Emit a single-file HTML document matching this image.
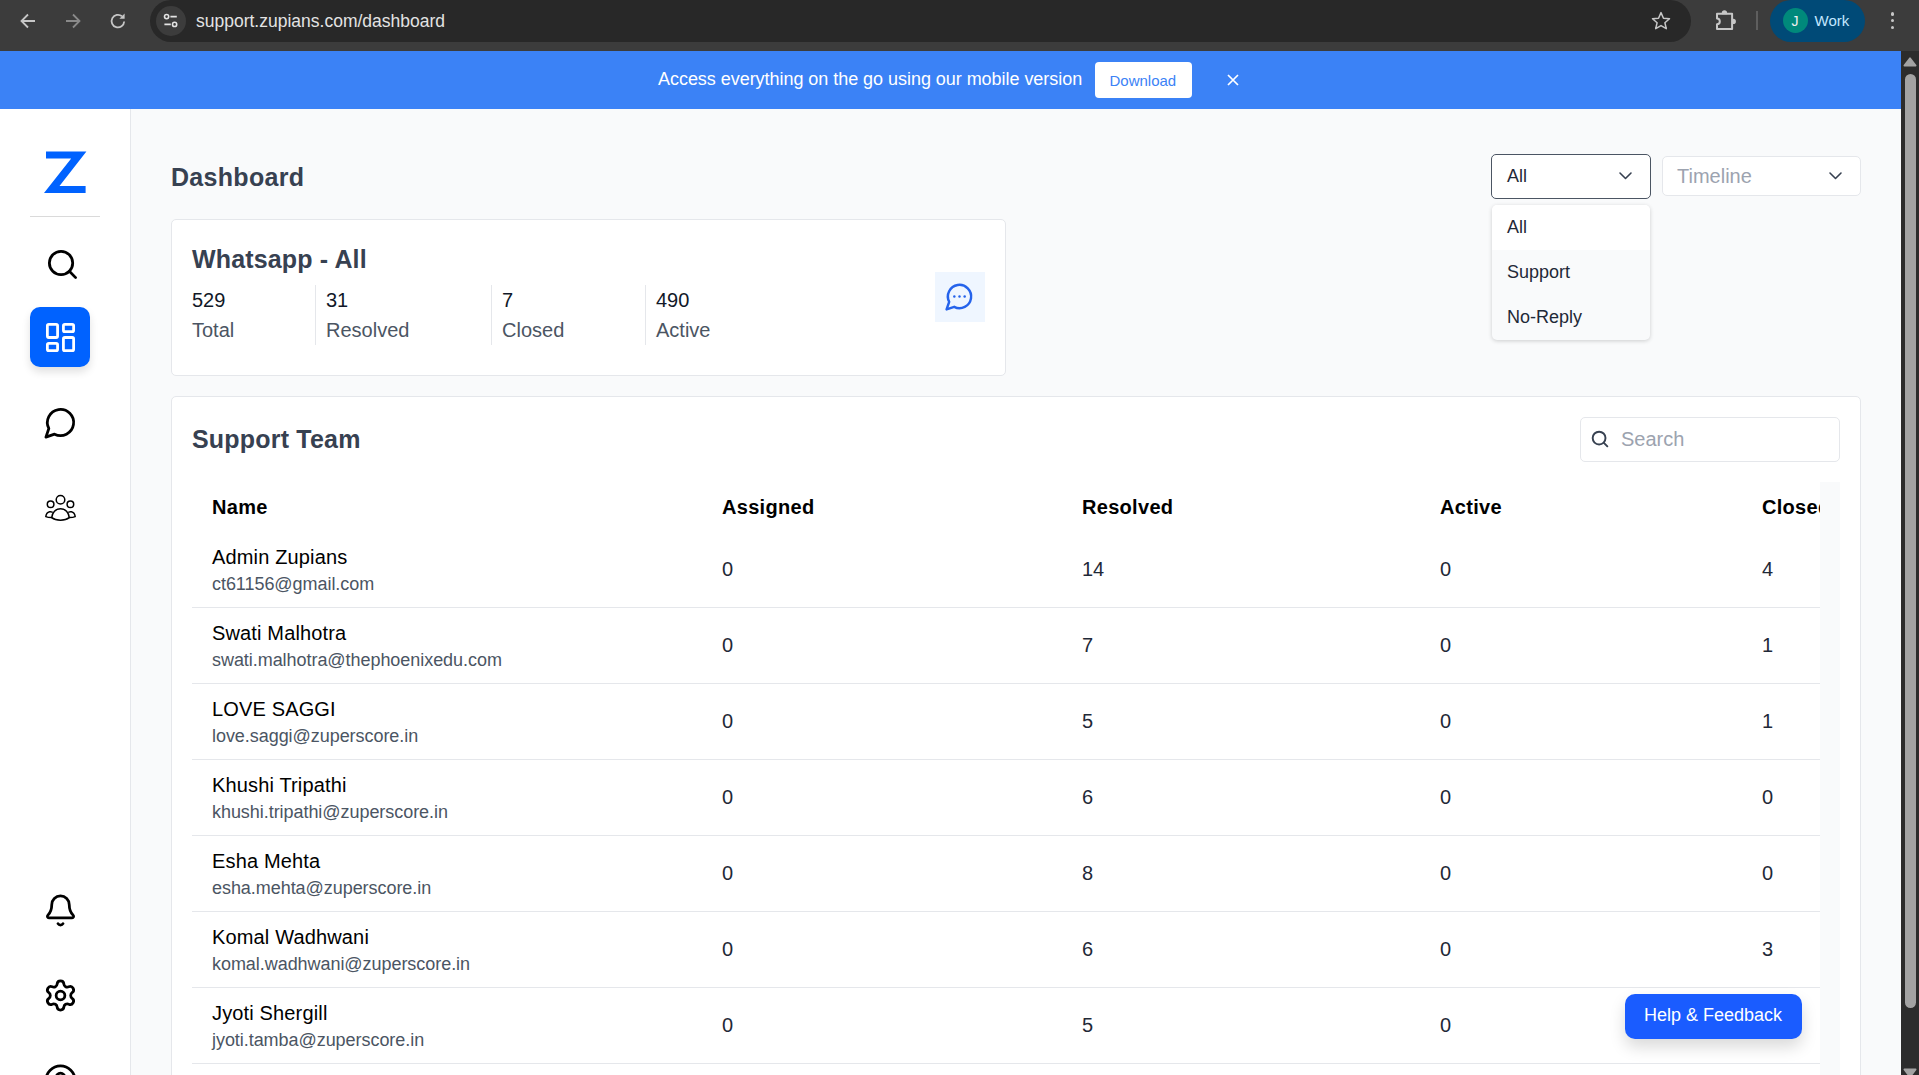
<!DOCTYPE html>
<html><head><meta charset="utf-8">
<style>
*{box-sizing:border-box;margin:0;padding:0}
html,body{width:1919px;height:1075px;overflow:hidden;background:#f9fafb;font-family:"Liberation Sans",sans-serif;position:relative}
.a{position:absolute}
.t{position:absolute;white-space:nowrap;line-height:1}
svg{position:absolute;overflow:visible}
#chrome{left:0;top:0;width:1919px;height:51px;background:#3c3c3c}
#omni{left:150px;top:0px;width:1541px;height:42px;border-radius:21px;background:#282828}
#banner{left:0;top:51px;width:1901px;height:58px;background:#3b82f6}
#vscroll{left:1901px;top:51px;width:18px;height:1024px;background:#2c2c2c}
#side{left:0;top:109px;width:131px;height:966px;background:#fff;border-right:1px solid #e5e7eb}
.stn{font-size:20px;color:#111827}.stl{font-size:20px;color:#4b5563}.vd{top:285px;width:1px;height:60px;background:#e5e7eb}.th{font-size:20px;font-weight:bold;color:#000;letter-spacing:0.3px}.nm{font-size:20px;color:#000;letter-spacing:0.15px}.em{font-size:18px;color:#4b5563;letter-spacing:-0.05px}.num{font-size:20px;color:#1f2937}
.card{position:absolute;background:#fff;border:1px solid #e5e7eb;border-radius:5px}
</style></head><body>
<!-- browser chrome -->
<div id="chrome" class="a"></div>
<svg style="left:19px;top:12px" width="18" height="18" viewBox="0 0 18 18"><path d="M16 9H3M9 2.5L2.5 9L9 15.5" fill="none" stroke="#c7c7c7" stroke-width="1.8"/></svg>
<svg style="left:64px;top:12px" width="18" height="18" viewBox="0 0 18 18"><path d="M2 9h13M9 2.5L15.5 9L9 15.5" fill="none" stroke="#8a8a8a" stroke-width="1.8"/></svg>
<svg style="left:109px;top:12px" width="18" height="18" viewBox="0 0 18 18"><path d="M15.2 9.5A6.3 6.3 0 1 1 13 4.3" fill="none" stroke="#c7c7c7" stroke-width="1.8"/><path d="M15.6 1.6v5.2h-5.2z" fill="#c7c7c7"/></svg>
<div id="omni" class="a"></div>
<div class="a" style="left:156px;top:6px;width:30px;height:30px;border-radius:15px;background:#3c3c3c"></div>
<svg style="left:162px;top:12px" width="18" height="18" viewBox="0 0 18 18"><circle cx="4.6" cy="4.6" r="2.1" fill="none" stroke="#e3e3e3" stroke-width="1.6"/><path d="M8.4 4.6h6.4M2.4 12.4h6.4" stroke="#e3e3e3" stroke-width="1.6"/><circle cx="12.6" cy="12.4" r="2.1" fill="none" stroke="#e3e3e3" stroke-width="1.6"/></svg>
<div class="t" style="left:196px;top:13px;font-size:17.5px;color:#e3e3e3">support.zupians.com/dashboard</div>
<svg style="left:1651px;top:11px" width="20" height="20" viewBox="0 0 20 20"><path d="M10 1.6l2.45 5.6 6.05.55-4.6 4 1.4 5.95L10 14.55 4.7 17.7l1.4-5.95-4.6-4 6.05-.55z" fill="none" stroke="#c7c7c7" stroke-width="1.5" stroke-linejoin="round"/></svg>
<svg style="left:1710px;top:6px" width="30" height="30" viewBox="0 0 30 30"><path d="M7 7.8H22.1V22.9H7V18.2A2.8 2.8 0 0 0 7 12.6Z" fill="none" stroke="#c7c7c7" stroke-width="2" stroke-linejoin="round"/><path d="M11.8 6.8A2.65 2.65 0 0 1 17.1 6.8V8.2H11.8Z" fill="#c7c7c7"/><path d="M23.2 12.7A2.7 2.7 0 0 1 23.2 18.1H22.1V12.7Z" fill="#c7c7c7"/></svg>
<div class="a" style="left:1756px;top:11px;width:2px;height:19px;background:#5e5e5e"></div>
<div class="a" style="left:1770px;top:0px;width:95px;height:42px;border-radius:21px;background:#004a77"></div>
<div class="a" style="left:1783px;top:8px;width:25px;height:25px;border-radius:13px;background:#00897b"></div>
<div class="t" style="left:1791.5px;top:14px;font-size:14px;color:#f0f0f0">J</div>
<div class="t" style="left:1814.5px;top:13.4px;font-size:15px;color:#c2e7ff">Work</div>
<div class="a" style="left:1890.8px;top:12px;width:3.6px;height:3.6px;border-radius:1.8px;background:#c7c7c7"></div>
<div class="a" style="left:1890.8px;top:18.8px;width:3.6px;height:3.6px;border-radius:1.8px;background:#c7c7c7"></div>
<div class="a" style="left:1890.8px;top:25.6px;width:3.6px;height:3.6px;border-radius:1.8px;background:#c7c7c7"></div>

<!-- banner -->
<div id="banner" class="a"></div>
<div class="t" style="left:658px;top:69.5px;font-size:18px;color:#fff;letter-spacing:-0.04px">Access everything on the go using our mobile version</div>
<div class="a" style="left:1095px;top:62px;width:97px;height:36px;border-radius:4px;background:#fff"></div>
<div class="t" style="left:1109.5px;top:73px;font-size:15px;color:#3b82f6">Download</div>
<svg style="left:1227px;top:74px" width="12" height="12" viewBox="0 0 12 12"><path d="M1 1l10 10M11 1L1 11" stroke="#fff" stroke-width="1.7"/></svg>

<!-- page scrollbar -->
<div id="vscroll" class="a"></div>
<svg style="left:1901px;top:51px" width="18" height="20" viewBox="0 0 18 20"><path d="M9 7.2L14.6 14.6H3.4z" fill="#a3a3a3" stroke="#a3a3a3" stroke-width="1.8" stroke-linejoin="round"/></svg>
<div class="a" style="left:1905px;top:74px;width:11px;height:934px;border-radius:5.5px;background:#a3a3a3"></div>
<svg style="left:1901px;top:1064px" width="18" height="20" viewBox="0 0 18 20"><path d="M3.4 5.4H14.6L9 12.8z" fill="#a3a3a3" stroke="#a3a3a3" stroke-width="1.8" stroke-linejoin="round"/></svg>

<!-- sidebar -->
<div id="side" class="a"></div>
<svg style="left:0;top:0" width="131" height="220" viewBox="0 0 131 220"><polygon points="46,151.6 86.4,151.6 59.5,186.1 85.6,186.1 85.6,193 44,193 71.2,158.6 46,158.6" fill="#0062ff"/></svg>
<div class="a" style="left:30px;top:216px;width:70px;height:1px;background:#dadada"></div>
<svg style="left:45px;top:246.8px" width="35" height="35" viewBox="0 0 24 24" fill="none" stroke="#000" stroke-width="1.9" stroke-linecap="round" stroke-linejoin="round"><circle cx="11" cy="11" r="8"/><path d="m21 21-4.3-4.3"/></svg>
<div class="a" style="left:30px;top:307px;width:60px;height:60px;border-radius:10px;background:#0062ff;box-shadow:0 5px 8px rgba(0,0,0,0.12)"></div>
<svg style="left:43px;top:320px" width="35" height="35" viewBox="0 0 24 24" fill="none" stroke="#fff" stroke-width="1.9" stroke-linecap="round" stroke-linejoin="round"><rect width="7" height="9" x="3" y="3" rx="1"/><rect width="7" height="5" x="14" y="3" rx="1"/><rect width="7" height="9" x="14" y="12" rx="1"/><rect width="7" height="5" x="3" y="16" rx="1"/></svg>
<svg style="left:43px;top:405px" width="35" height="35" viewBox="0 0 24 24" fill="none" stroke="#000" stroke-width="1.9" stroke-linecap="round" stroke-linejoin="round"><path d="M7.9 20A9 9 0 1 0 4 16.1L2 22Z"/></svg>
<svg style="left:40px;top:488px" width="42" height="38" viewBox="0 0 42 38" fill="none" stroke="#000" stroke-width="1.5" stroke-linecap="round" stroke-linejoin="round"><circle cx="20.5" cy="11.7" r="4.3"/><circle cx="10.6" cy="16.3" r="3.3"/><circle cx="30.4" cy="16.3" r="3.3"/><path d="M11.7 29.7C12.2 24.5 15.6 20.7 20.5 20.7S28.8 24.5 29.3 29.7C27 31.5 24 32.3 20.5 32.3S14 31.5 11.7 29.7Z"/><path d="M12.2 24.2C11.3 23.7 10.4 23.6 9.6 23.8 7.5 24.3 6.1 26.3 5.8 28.6 7.5 29.3 9.5 29.5 11.6 29.5"/><path d="M28.8 24.2C29.7 23.7 30.6 23.6 31.4 23.8 33.5 24.3 34.9 26.3 35.2 28.6 33.5 29.3 31.5 29.5 29.4 29.5"/></svg>
<svg style="left:43px;top:893px" width="35" height="35" viewBox="0 0 24 24" fill="none" stroke="#000" stroke-width="1.9" stroke-linecap="round" stroke-linejoin="round"><path d="M10.268 21a2 2 0 0 0 3.464 0"/><path d="M3.262 15.326A1 1 0 0 0 4 17h16a1 1 0 0 0 .74-1.673C19.41 13.956 18 12.499 18 8A6 6 0 0 0 6 8c0 4.499-1.411 5.956-2.738 7.326"/></svg>
<svg style="left:43px;top:977.7px" width="35" height="35" viewBox="0 0 24 24" fill="none" stroke="#000" stroke-width="1.9" stroke-linecap="round" stroke-linejoin="round"><path d="M9.671 4.136a2.34 2.34 0 0 1 4.659 0 2.34 2.34 0 0 0 3.319 1.915 2.34 2.34 0 0 1 2.33 4.033 2.34 2.34 0 0 0 0 3.831 2.34 2.34 0 0 1-2.33 4.033 2.34 2.34 0 0 0-3.319 1.915 2.34 2.34 0 0 1-4.659 0 2.34 2.34 0 0 0-3.32-1.915 2.34 2.34 0 0 1-2.33-4.033 2.34 2.34 0 0 0 0-3.831A2.34 2.34 0 0 1 6.35 6.051a2.34 2.34 0 0 0 3.319-1.915"/><circle cx="12" cy="12" r="3"/></svg>
<svg style="left:43px;top:1062.7px" width="35" height="35" viewBox="0 0 24 24" fill="none" stroke="#000" stroke-width="1.9" stroke-linecap="round" stroke-linejoin="round"><circle cx="12" cy="12" r="10"/><circle cx="12" cy="10" r="3"/><path d="M7 20.662V19a2 2 0 0 1 2-2h6a2 2 0 0 1 2 2v1.662"/></svg>

<!-- main -->
<div class="t" style="left:171px;top:164.5px;font-size:25px;font-weight:bold;color:#374151;letter-spacing:0.3px">Dashboard</div>
<div class="card" style="left:171px;top:219px;width:835px;height:157px"></div>
<div class="t" style="left:192px;top:246.5px;font-size:25px;font-weight:bold;color:#374151;letter-spacing:0.15px">Whatsapp - All</div>
<div class="t stn" style="left:192px;top:290px">529</div><div class="t stl" style="left:192px;top:320px">Total</div>
<div class="a vd" style="left:315px"></div>
<div class="t stn" style="left:326px;top:290px">31</div><div class="t stl" style="left:326px;top:320px">Resolved</div>
<div class="a vd" style="left:491px"></div>
<div class="t stn" style="left:502px;top:290px">7</div><div class="t stl" style="left:502px;top:320px">Closed</div>
<div class="a vd" style="left:645px"></div>
<div class="t stn" style="left:656px;top:290px">490</div><div class="t stl" style="left:656px;top:320px">Active</div>
<div class="a" style="left:935px;top:272px;width:50px;height:50px;background:#eff6ff"></div>
<svg style="left:944px;top:281px" width="31" height="31" viewBox="0 0 24 24" fill="none" stroke="#2563eb" stroke-width="1.9" stroke-linecap="round" stroke-linejoin="round"><path d="M7.9 20A9 9 0 1 0 4 16.1L2 22Z"/><path d="M8 12h.01"/><path d="M12 12h.01"/><path d="M16 12h.01"/></svg>

<!-- dropdowns -->
<div class="a" style="left:1491px;top:154px;width:160px;height:45px;border:1.5px solid #4b5563;border-radius:5px;background:#fff"></div>
<div class="t" style="left:1507px;top:167px;font-size:18px;color:#1f2937">All</div>
<svg style="left:1618.5px;top:171.5px" width="13" height="8" viewBox="0 0 13 8" fill="none" stroke="#374151" stroke-width="1.6" stroke-linecap="round" stroke-linejoin="round"><path d="M1 1l5.5 5.5L12 1"/></svg>
<div class="a" style="left:1662px;top:156px;width:199px;height:40px;border:1px solid #e5e7eb;border-radius:5px;background:#fff"></div>
<div class="t" style="left:1677px;top:165.5px;font-size:20px;color:#9ca3af">Timeline</div>
<svg style="left:1828.5px;top:171.5px" width="13" height="8" viewBox="0 0 13 8" fill="none" stroke="#374151" stroke-width="1.6" stroke-linecap="round" stroke-linejoin="round"><path d="M1 1l5.5 5.5L12 1"/></svg>
<div class="a" style="left:1492px;top:205px;width:158px;height:135px;border-radius:5px;background:#f9fafb;box-shadow:0 1px 4px rgba(0,0,0,0.18);overflow:hidden">
<div class="a" style="left:0;top:0;width:158px;height:45px;background:#fff"></div>
<div class="t" style="left:15px;top:13px;font-size:18px;color:#1f2937">All</div>
<div class="t" style="left:15px;top:58px;font-size:18px;color:#1f2937">Support</div>
<div class="t" style="left:15px;top:103px;font-size:18px;color:#1f2937">No-Reply</div>
</div>

<!-- support team -->
<div class="card" style="left:171px;top:396px;width:1690px;height:700px"></div>
<div class="t" style="left:192px;top:427px;font-size:25px;font-weight:bold;color:#374151;letter-spacing:0.2px">Support Team</div>
<div class="a" style="left:1580px;top:417px;width:260px;height:45px;border:1px solid #e5e7eb;border-radius:5px;background:#fff"></div>
<svg style="left:1589px;top:428px" width="22" height="22" viewBox="0 0 24 24" fill="none" stroke="#374151" stroke-width="2.1" stroke-linecap="round" stroke-linejoin="round"><circle cx="11" cy="11" r="7"/><path d="m20 20-3.5-3.5"/></svg>
<div class="t" style="left:1621px;top:429px;font-size:20px;color:#9ca3af">Search</div>
<div class="a" style="left:1820px;top:482px;width:20px;height:600px;background:#f9fafb"></div>
<div class="a" style="left:192px;top:483px;width:1628px;height:600px;overflow:hidden">
<div class="t th" style="left:20px;top:14px">Name</div>
<div class="t th" style="left:530px;top:14px">Assigned</div>
<div class="t th" style="left:890px;top:14px">Resolved</div>
<div class="t th" style="left:1248px;top:14px">Active</div>
<div class="t th" style="left:1570px;top:14px">Closed</div>
<div class="t nm" style="left:20px;top:64px">Admin Zupians</div>
<div class="t em" style="left:20px;top:92px">ct61156@gmail.com</div>
<div class="t num" style="left:530px;top:76px">0</div>
<div class="t num" style="left:890px;top:76px">14</div>
<div class="t num" style="left:1248px;top:76px">0</div>
<div class="t num" style="left:1570px;top:76px">4</div>
<div class="a" style="left:0;top:124px;width:1628px;height:1px;background:#e5e7eb"></div>
<div class="t nm" style="left:20px;top:140px">Swati Malhotra</div>
<div class="t em" style="left:20px;top:168px">swati.malhotra@thephoenixedu.com</div>
<div class="t num" style="left:530px;top:152px">0</div>
<div class="t num" style="left:890px;top:152px">7</div>
<div class="t num" style="left:1248px;top:152px">0</div>
<div class="t num" style="left:1570px;top:152px">1</div>
<div class="a" style="left:0;top:200px;width:1628px;height:1px;background:#e5e7eb"></div>
<div class="t nm" style="left:20px;top:216px">LOVE SAGGI</div>
<div class="t em" style="left:20px;top:244px">love.saggi@zuperscore.in</div>
<div class="t num" style="left:530px;top:228px">0</div>
<div class="t num" style="left:890px;top:228px">5</div>
<div class="t num" style="left:1248px;top:228px">0</div>
<div class="t num" style="left:1570px;top:228px">1</div>
<div class="a" style="left:0;top:276px;width:1628px;height:1px;background:#e5e7eb"></div>
<div class="t nm" style="left:20px;top:292px">Khushi Tripathi</div>
<div class="t em" style="left:20px;top:320px">khushi.tripathi@zuperscore.in</div>
<div class="t num" style="left:530px;top:304px">0</div>
<div class="t num" style="left:890px;top:304px">6</div>
<div class="t num" style="left:1248px;top:304px">0</div>
<div class="t num" style="left:1570px;top:304px">0</div>
<div class="a" style="left:0;top:352px;width:1628px;height:1px;background:#e5e7eb"></div>
<div class="t nm" style="left:20px;top:368px">Esha Mehta</div>
<div class="t em" style="left:20px;top:396px">esha.mehta@zuperscore.in</div>
<div class="t num" style="left:530px;top:380px">0</div>
<div class="t num" style="left:890px;top:380px">8</div>
<div class="t num" style="left:1248px;top:380px">0</div>
<div class="t num" style="left:1570px;top:380px">0</div>
<div class="a" style="left:0;top:428px;width:1628px;height:1px;background:#e5e7eb"></div>
<div class="t nm" style="left:20px;top:444px">Komal Wadhwani</div>
<div class="t em" style="left:20px;top:472px">komal.wadhwani@zuperscore.in</div>
<div class="t num" style="left:530px;top:456px">0</div>
<div class="t num" style="left:890px;top:456px">6</div>
<div class="t num" style="left:1248px;top:456px">0</div>
<div class="t num" style="left:1570px;top:456px">3</div>
<div class="a" style="left:0;top:504px;width:1628px;height:1px;background:#e5e7eb"></div>
<div class="t nm" style="left:20px;top:520px">Jyoti Shergill</div>
<div class="t em" style="left:20px;top:548px">jyoti.tamba@zuperscore.in</div>
<div class="t num" style="left:530px;top:532px">0</div>
<div class="t num" style="left:890px;top:532px">5</div>
<div class="t num" style="left:1248px;top:532px">0</div>
<div class="a" style="left:0;top:580px;width:1628px;height:1px;background:#e5e7eb"></div>
</div>
<div class="a" style="left:1625px;top:994px;width:177px;height:45px;border-radius:10px;background:#1a5cff;box-shadow:0 8px 16px rgba(0,0,0,0.15)"></div>
<div class="t" style="left:1644px;top:1006px;font-size:18px;color:#fff">Help &amp; Feedback</div>
</body></html>
